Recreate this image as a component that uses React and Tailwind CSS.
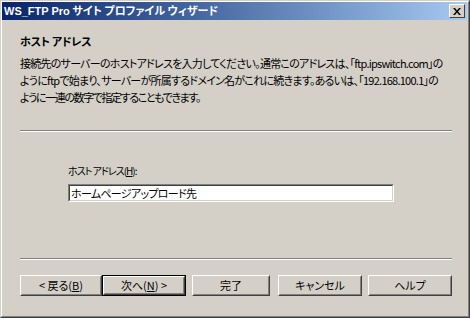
import React from "react";

const jp = { fontFamily: '"Noto Sans CJK JP", "Liberation Sans", sans-serif', fontFeatureSettings: '"palt"' };

function Btn({ children, w, isDefault }) {
  const inner = (
    <div className="h-full w-full border border-t-white border-l-white border-r-[#404040] border-b-[#404040]">
      <div className="h-full w-full border border-t-[#d4d0c8] border-l-[#d4d0c8] border-r-[#808080] border-b-[#808080] flex items-center justify-center text-[11px] text-black leading-none whitespace-nowrap">
        {children}
      </div>
    </div>
  );
  return (
    <div className={`h-[21px] ${w} ${isDefault ? "border border-black" : ""}`}>{inner}</div>
  );
}

function Sep() {
  return (
    <div className="w-[432px]">
      <div className="h-px bg-[#808080]" />
      <div className="h-px bg-white" />
    </div>
  );
}

export default function App() {
  return (
    <div className="w-[470px] h-[318px] bg-[#d4d0c8] border border-t-[#d4d0c8] border-l-[#d4d0c8] border-r-[#404040] border-b-[#404040]" style={jp}>
      <div className="h-full w-full border border-t-white border-l-white border-r-[#808080] border-b-[#808080] flex flex-col">
        <div className="h-[18px] mr-px flex items-center justify-between bg-gradient-to-r from-[#0a246a] to-[#a6caf0] pl-[2px] pr-[2px]">
          <div className="text-white font-bold text-[11px] leading-none whitespace-nowrap">
            <span style={{ fontFamily: '"Liberation Sans", sans-serif' }}>WS_FTP Pro</span>{" "}
            <span>サイト プロファイル ウィザード</span>
          </div>
          <div className="w-[16px] h-[14px] bg-[#d4d0c8] border border-t-white border-l-white border-r-[#404040] border-b-[#404040] flex items-center justify-center">
            <svg width="8" height="7" viewBox="0 0 8 7">
              <path d="M0 0h2l2 2.5L6 0h2L5 3.5 8 7H6L4 4.5 2 7H0l3-3.5z" fill="#000" />
            </svg>
          </div>
        </div>
        <div className="pl-[18px] flex flex-col">
          <div className="mt-[13px] font-bold text-[11px] leading-[16px] tracking-[-0.3px] whitespace-nowrap">ホスト アドレス</div>
          <div className="mt-[6px] text-[11px] leading-[17px] whitespace-nowrap">
            <div className="tracking-[-0.75px]">接続先のサーバーのホストアドレスを入力してください。通常このアドレスは、「ftp.ipswitch.com」の</div>
            <div className="tracking-[-0.75px]">ようにftpで始まり、サーバーが所属するドメイン名がこれに続きます。あるいは、「192.168.100.1」の</div>
            <div className="tracking-[-1.4px]">ように一連の数字で指定することもできます。</div>
          </div>
          <div className="mt-[24px]"><Sep /></div>
          <div className="ml-[48px] mt-[31px] text-[10px] leading-[16px] tracking-[-1px] whitespace-nowrap">
            ホスト アドレス(<span className="underline">H</span>):
          </div>
          <div className="ml-[48px] mt-[5px] w-[326px] h-[18px] border border-t-[#808080] border-l-[#808080] border-r-white border-b-white">
            <div className="h-full w-full bg-white border border-t-[#404040] border-l-[#404040] border-r-[#d4d0c8] border-b-[#d4d0c8] pl-[1px] text-[11px] leading-[14px] tracking-[-0.7px] whitespace-nowrap">
              ホームページアップロード先
            </div>
          </div>
          <div className="mt-[56px]"><Sep /></div>
          <div className="mt-[15px] flex">
            <Btn w="w-[82px]">&lt; 戻る(<span className="underline">B</span>)</Btn>
            <Btn w="w-[84px]" isDefault>次へ(<span className="underline">N</span>) &gt;</Btn>
            <div className="ml-[6px]"><Btn w="w-[78px]">完了</Btn></div>
            <div className="ml-[8px]"><Btn w="w-[84px]">キャンセル</Btn></div>
            <div className="ml-[6px]"><Btn w="w-[84px]">ヘルプ</Btn></div>
          </div>
        </div>
      </div>
    </div>
  );
}
